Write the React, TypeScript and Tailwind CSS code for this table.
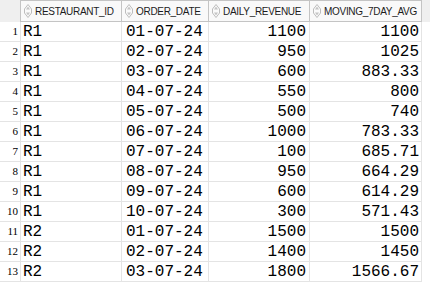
import React from 'react';

const rows = [
  ['R1', '01-07-24', '1100', '1100'],
  ['R1', '02-07-24', '950', '1025'],
  ['R1', '03-07-24', '600', '883.33'],
  ['R1', '04-07-24', '550', '800'],
  ['R1', '05-07-24', '500', '740'],
  ['R1', '06-07-24', '1000', '783.33'],
  ['R1', '07-07-24', '100', '685.71'],
  ['R1', '08-07-24', '950', '664.29'],
  ['R1', '09-07-24', '600', '614.29'],
  ['R1', '10-07-24', '300', '571.43'],
  ['R2', '01-07-24', '1500', '1500'],
  ['R2', '02-07-24', '1400', '1450'],
  ['R2', '03-07-24', '1800', '1566.67'],
];

function SortIcon() {
  return (
    <svg width="8" height="14" viewBox="0 0 8 14" className="shrink-0">
      <path d="M4 0.5 L7.5 5 L7.5 9 L4 13.5 L0.5 9 L0.5 5 Z" fill="#fafafa" stroke="#bdbdbd" strokeWidth="1" />
      <path d="M4 2.5 L6 5.5 L2 5.5 Z" fill="#c4c4c4" />
      <path d="M4 11.5 L6 8.5 L2 8.5 Z" fill="#c4c4c4" />
    </svg>
  );
}

function HeaderCell({ label, width }: { label: string; width: string }) {
  return (
    <div
      className={`${width} h-full flex items-center gap-[3px] pl-[3px] bg-[#f9f9f9] border-y border-r border-[#c4c4c4] text-[10px] tracking-[-0.3px] text-[#1c1c1c] font-['Liberation_Sans',Arial,sans-serif] overflow-hidden whitespace-nowrap`}
    >
      <SortIcon />
      <span>{label}</span>
    </div>
  );
}

const cell = 'h-full flex items-center border-r border-b border-[#e4e4e4]';

export default function App() {
  return (
    <div className="w-[430px] h-[290px] bg-white overflow-hidden">
      <div className="flex h-[22px] bg-[#efefef]">
        <div className="w-[21px] h-full border-r border-[#c4c4c4]" />
        <HeaderCell label="RESTAURANT_ID" width="w-[101px]" />
        <HeaderCell label="ORDER_DATE" width="w-[87px]" />
        <HeaderCell label="DAILY_REVENUE" width="w-[101px]" />
        <HeaderCell label="MOVING_7DAY_AVG" width="w-[112px]" />
      </div>
      {rows.map((r, i) => (
        <div key={i} className="flex h-[20px] text-black text-[16px] font-['Liberation_Mono','Courier_New',monospace]">
          <div className={`${cell} w-[21px] justify-end pr-[2px] text-[11px] font-['Liberation_Serif','Times_New_Roman',serif]`}>
            {i + 1}
          </div>
          <div className={`${cell} w-[101px] pl-[2px]`}>{r[0]}</div>
          <div className={`${cell} w-[87px] pl-[4px]`}>{r[1]}</div>
          <div className={`${cell} w-[101px] justify-end pr-[3px]`}>{r[2]}</div>
          <div className={`${cell} w-[112px] justify-end pr-[2px]`}>{r[3]}</div>
        </div>
      ))}
    </div>
  );
}
